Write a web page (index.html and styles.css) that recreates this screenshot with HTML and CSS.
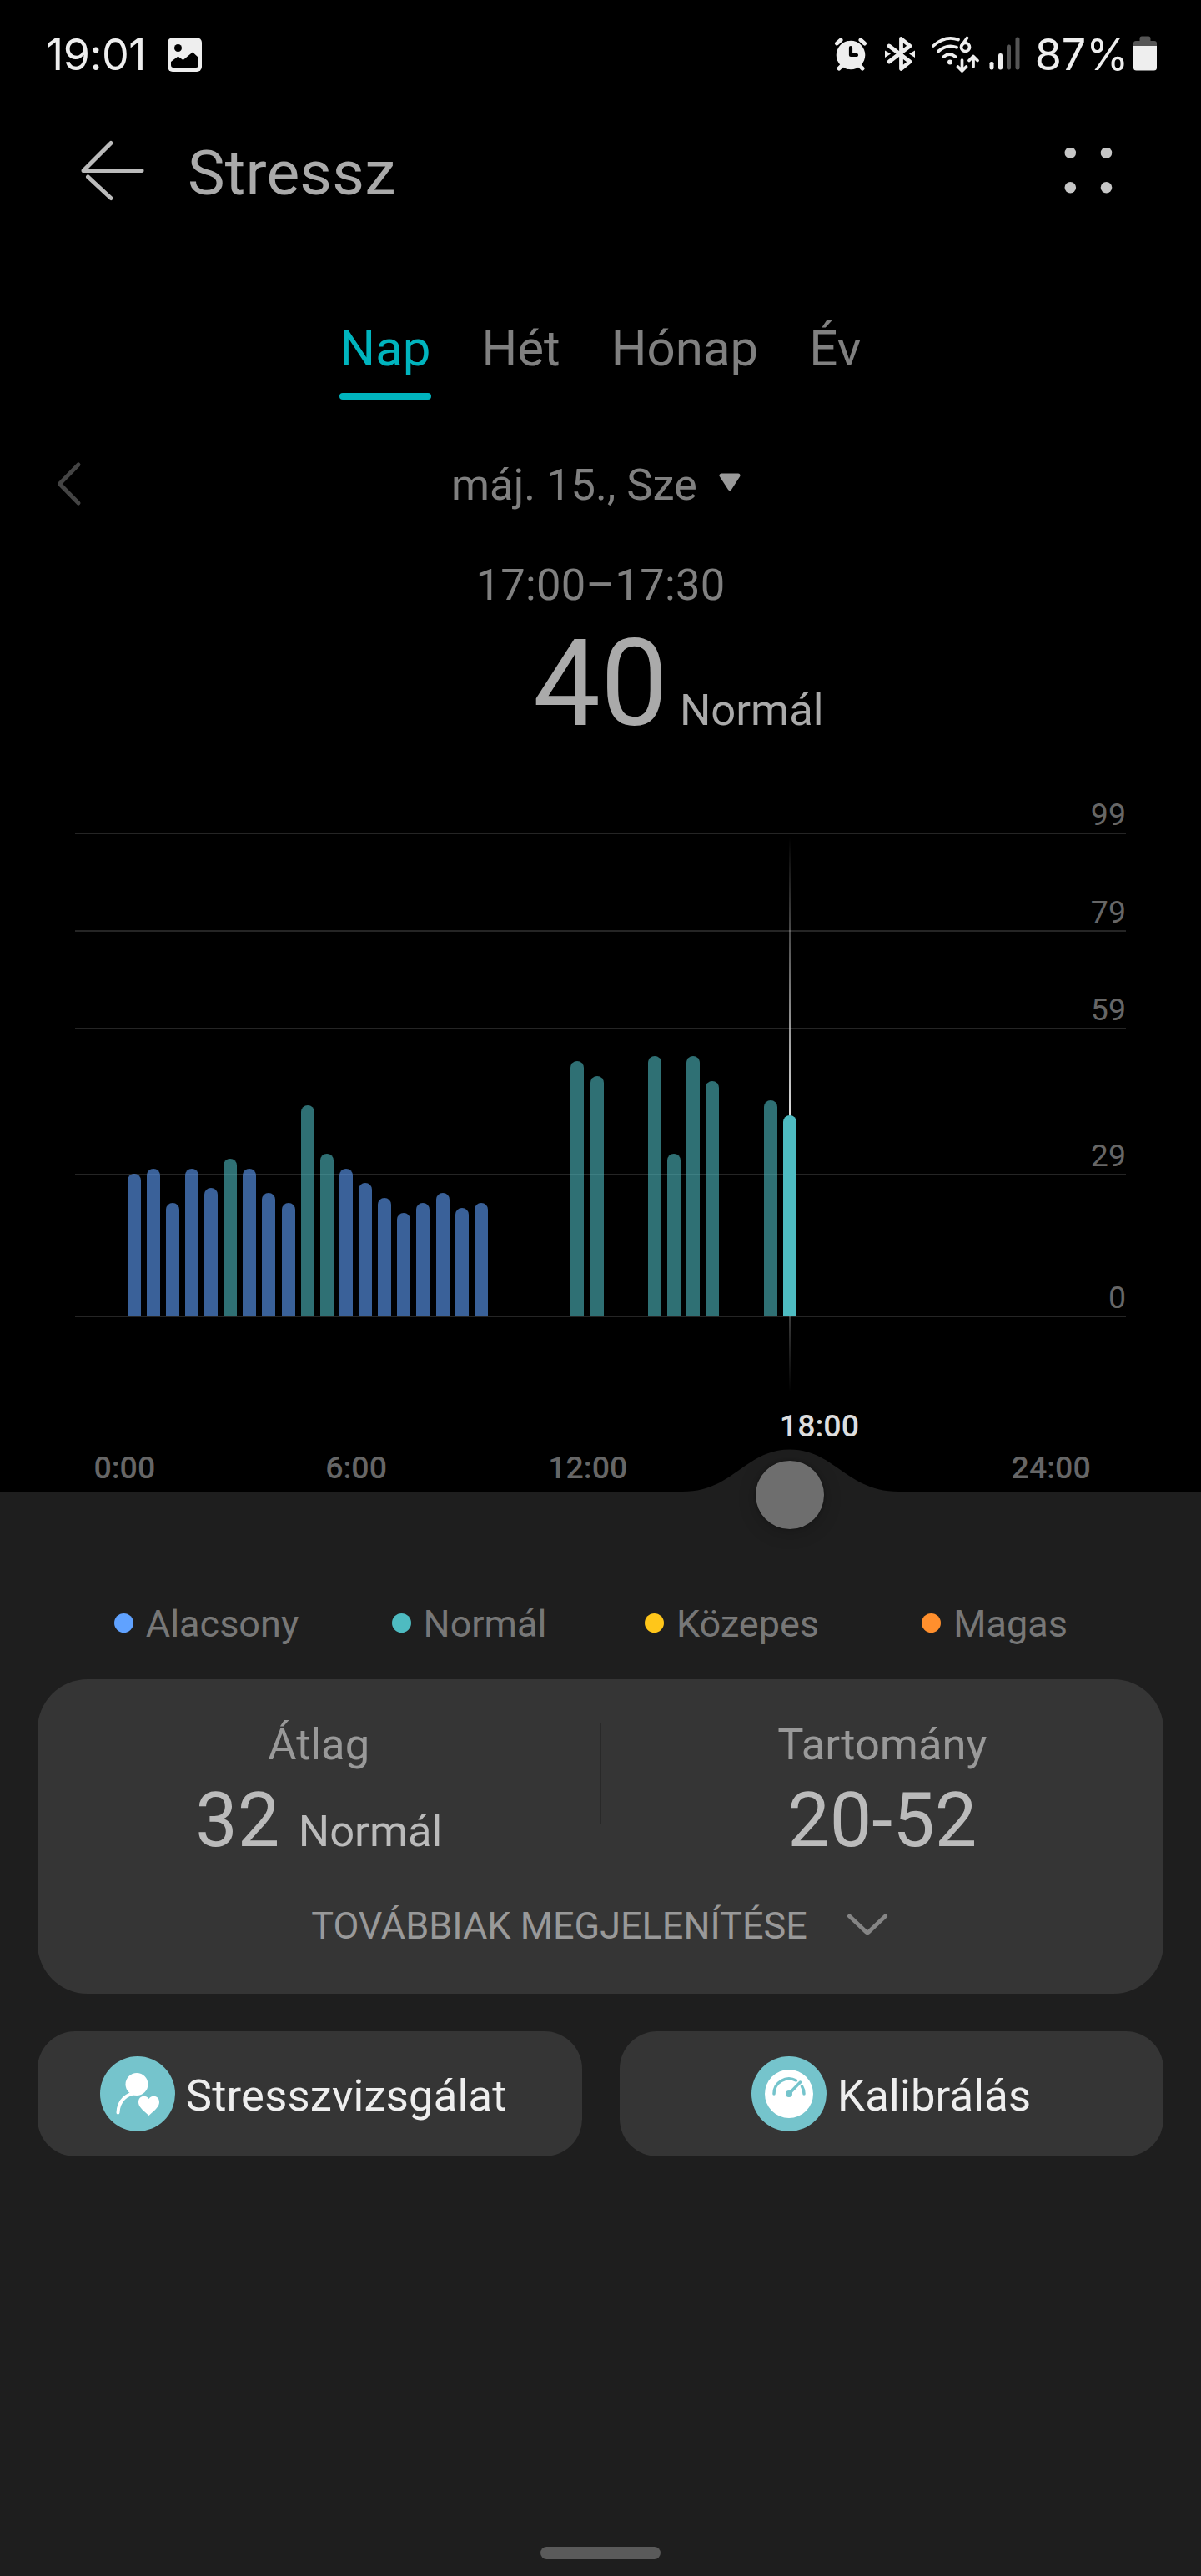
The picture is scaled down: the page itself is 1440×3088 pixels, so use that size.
FILE: index.html
```html
<!DOCTYPE html>
<html lang="hu">
  <head>
    <meta charset="UTF-8" />
    <meta name="viewport" content="width=device-width, initial-scale=1.0" />
    <title>Stressz</title>
    <link rel="stylesheet" href="styles.css">
  </head>
  <body>
    <div class="status">
      <span class="clock">19:01</span>
      <svg class="picture" width="41" height="41" viewBox="0 0 41 41">
        <rect width="41" height="41" rx="6" fill="#eee" />
        <circle cx="12.5" cy="12.5" r="4.5" />
        <path d="M4 29 12.5 22.5 18.500 27 30 17.500 37 24V33q0 3-3 3H7q-3 0-3-3z" />
      </svg>
      <div class="status-right">
        <svg width="40" height="44" viewBox="0 0 40 44">
          <g fill="none" stroke="#eee" stroke-width="5" stroke-linecap="round">
            <path d="M3.500 9 8 5M36.500 9 32 5M10 35l-4 4M30 35l4 4" />
          </g>
          <circle cx="20" cy="23" r="17.300" fill="#eee" />
          <path d="M20 14v9h7" fill="none" stroke="#000" stroke-width="4.200" stroke-linecap="round" stroke-linejoin="round" />
        </svg>
        <svg class="bluetooth" width="38" height="44" viewBox="0 0 38 44">
          <path d="M6 12 31 31 20.500 39.500V3.500L31 12 6 31" fill="none" stroke="#eee" stroke-width="4.800" stroke-linecap="round" stroke-linejoin="round" />
          <path d="M1 17.500 8 21.500 1 26zM37 17.500 30 21.500 37 26z" fill="#eee" />
        </svg>
        <svg class="wifi" width="58" height="44" viewBox="0 0 58 44">
          <g fill="none" stroke="#eee" stroke-width="3.700" stroke-linecap="round" stroke-linejoin="round">
            <path d="M3 12Q17-1 33 4.500M9 18.500Q19 9.500 31 13.800M15.500 25Q22.500 19 29.500 25" />
            <path d="M43.500 2.500 37.500 11" />
            <circle cx="41.500" cy="13.500" r="5" />
            <path d="M37.500 29V41M32.500 37l5 5 5-5M51 37V25.500M46 29.500l5-5 5 5" />
          </g>
          <circle cx="23" cy="31.500" r="3" fill="#eee" />
        </svg>
        <svg class="signal" width="38" height="44" viewBox="0 0 38 44">
          <rect x="1.500" y="31" width="5" height="9.500" rx="2.200" fill="#eee" />
          <rect x="12" y="21" width="5" height="19.500" rx="2.200" fill="#eee" />
          <rect x="22" y="10.500" width="5" height="30" rx="2.200" fill="#555" />
          <rect x="32.500" y="1.500" width="5" height="39" rx="2.200" fill="#555" />
        </svg>
        <span class="percent">87%</span>
        <svg width="28" height="44" viewBox="0 0 28 44">
          <path d="M0 12V9q0-3 3-3h4.500V3q0-2.500 2.500-2.500h8q2.500 0 2.500 2.500v3H25q3 0 3 3v3z" fill="#555" />
          <path d="M0 12h28v26q0 3.500-3.500 3.500h-21Q0 41.500 0 38z" fill="#eee" />
        </svg>
      </div>
    </div>

    <header class="header">
      <svg width="80" height="74" viewBox="0 0 80 74">
        <path d="M75 36.500H5L38 3.500M10.500 44 38 69.500" fill="none" stroke="#bbb" stroke-width="5" stroke-linecap="round" stroke-linejoin="round" />
      </svg>
      <h1>Stressz</h1>
      <svg class="menu" width="58" height="56" viewBox="0 0 58 56" fill="#c6c6c6">
        <circle cx="7.300" cy="6.300" r="6.800" />
        <circle cx="50.500" cy="6.300" r="6.800" />
        <circle cx="7.300" cy="47.700" r="6.800" />
        <circle cx="50.500" cy="47.700" r="6.800" />
      </svg>
    </header>

    <nav class="tabs">
      <span class="tab active">Nap</span>
      <span class="tab">Hét</span>
      <span class="tab">Hónap</span>
      <span class="tab">Év</span>
    </nav>

    <div class="date">
      <svg width="30" height="54" viewBox="0 0 30 54">
        <path d="M26 4 3.500 27 26 50" fill="none" stroke="#444" stroke-width="5" stroke-linecap="round" stroke-linejoin="round" />
      </svg>
      <div class="date-label">
        <span>máj. 15., Sze</span>
        <svg width="28" height="22" viewBox="0 0 28 22">
          <path d="M4 3H24L14 18.500z" fill="#9a9a9a" stroke="#9a9a9a" stroke-width="5" stroke-linejoin="round" />
        </svg>
      </div>
    </div>

    <div class="time">17:00–17:30</div>
    <div class="score">
      <span class="score-num">40</span>
      <span class="score-text">Normál</span>
    </div>

    <div class="chart">
      <div class="lines">
        <div class="line first">99</div>
        <div class="line">79</div>
        <div class="line">59</div>
        <div class="line wide">29</div>
        <div class="line last">0</div>
      </div>
      <div class="cursor"></div>
      <div class="bars"></div>
    </div>
    <div class="axis">
      <span>0:00</span>
      <span>6:00</span>
      <span>12:00</span>
      <span class="current">18:00</span>
      <span>24:00</span>
    </div>

    <main class="panel">
      <svg class="bump" width="260" height="52" viewBox="0 0 260 52">
        <path d="M0 52V51C62 51 75 .5 129 .5S196 51 260 51V52z" fill="#1e1e1e" />
      </svg>
      <div class="knob"></div>

      <ul class="legend">
        <li><i class="dot low"></i>Alacsony</li>
        <li><i class="dot normal"></i>Normál</li>
        <li><i class="dot medium"></i>Közepes</li>
        <li><i class="dot high"></i>Magas</li>
      </ul>

      <section class="card">
        <div class="stats">
          <div class="stat">
            <div class="stat-title">Átlag</div>
            <div class="stat-value">32 <small>Normál</small></div>
          </div>
          <div class="divider"></div>
          <div class="stat">
            <div class="stat-title">Tartomány</div>
            <div class="stat-value">20-52</div>
          </div>
        </div>
        <div class="more">
          <span>TOVÁBBIAK MEGJELENÍTÉSE</span>
          <svg width="54" height="30" viewBox="0 0 54 30">
            <path d="M5.500 5 25 23.500Q27 25.500 29 23.500L48.500 5" fill="none" stroke="#858585" stroke-width="5" stroke-linecap="round" />
          </svg>
        </div>
      </section>

      <div class="actions">
        <div class="action test">
          <svg width="90" height="90" viewBox="0 0 90 90">
            <circle cx="45" cy="45" r="45" fill="#75c4cc" />
            <circle cx="44" cy="33.500" r="13.500" fill="#fff" />
            <path d="M21.500 67.500C22 53 32 44.500 44 44" fill="none" stroke="#fff" stroke-width="4" stroke-linecap="round" />
            <path d="M58.500 71C50 63.500 46 60 46 55 46 47 55 45.500 58.500 51 62 45.500 71 47 71 55 71 60 67 63.500 58.500 71z" fill="#fff" />
          </svg>
          <span>Stresszvizsgálat</span>
        </div>
        <div class="action">
          <svg width="90" height="90" viewBox="0 0 90 90">
            <circle cx="45" cy="45" r="45" fill="#75c4cc" />
            <circle cx="45" cy="45" r="29" fill="#fff" />
            <g fill="none" stroke="#75c4cc" stroke-width="3.500" stroke-linecap="round">
              <path d="M27 45A18 18 0 0 1 53.500 29M60.500 36Q63 40 63 45" />
              <path d="M45 45 58.500 31" />
            </g>
            <circle cx="45" cy="45" r="4" fill="#75c4cc" />
          </svg>
          <span>Kalibrálás</span>
        </div>
      </div>

      <div class="home"></div>
    </main>

    <script>
      // félórás értékek 0:00-tól, null = nincs mérés
      const values = [
        28, 29, 22, 29, 25, 31, 29, 24, 22, 42, 32, 29, 26, 23, 20, 22, 24, 21, 22,
        null, null, null, null, 51, 48, null, null, 52, 32, 52, 47, null, null, 43, 40
      ];
      const selected = 34;
      const bars = document.querySelector(".bars");

      values.forEach((value, index) => {
        const bar = document.createElement("div");
        bar.className = "bar";
        if (value !== null) {
          bar.classList.add(value < 30 ? "low" : "normal");
          bar.style.height = value * 5.85 + 7.5 + "px";
        }
        if (index === selected) bar.classList.add("selected");
        bars.append(bar);
      });
    </script>
  </body>
</html>
```
FILE: styles.css
```css
* {
  box-sizing: border-box;
  margin: 0;
  padding: 0;
}
body {
  width: 1440px;
  min-height: 3088px;
  display: flex;
  flex-direction: column;
  background-color: #000;
  color: #808080;
  font-family: Roboto, sans-serif;
  font-size: 52.5px;
}
svg {
  display: block;
  flex: none;
}

/* status bar */
.status {
  height: 130px;
  padding: 0 53px 0 55px;
  display: flex;
  align-items: center;
  color: #eee;
  font-family: Inter, sans-serif;
  font-size: 52px;
}
.clock {
  width: 146px;
  letter-spacing: -0.5px;
}
.status-right {
  margin-left: auto;
  display: flex;
  align-items: center;
}
.bluetooth {
  margin-left: 20px;
}
.wifi {
  margin-left: 18px;
}
.signal {
  margin-left: 11px;
}
.percent {
  width: 136px;
  padding-left: 12px;
  text-align: center;
}

.header {
  height: 150px;
  padding: 0 106px 0 95px;
  display: flex;
  align-items: center;
}
.header h1 {
  margin: 4px 0 0 50px;
  font-size: 75px;
  font-weight: 400;
  letter-spacing: 0.2px;
  color: #aaa;
}
.menu {
  margin-left: auto;
}

.tabs {
  margin-top: 98px;
  display: flex;
  justify-content: center;
  gap: 61px;
  font-size: 60px;
  line-height: 80px;
}
.tab {
  height: 101px;
}
.tab.active {
  color: #00b4be;
}
.tab.active::after {
  content: "";
  display: block;
  height: 8px;
  margin-top: 13px;
  border-radius: 4px;
  background-color: #00b4be;
}

.date {
  margin-top: 67px;
  padding: 0 68px;
  display: grid;
  grid-template-columns: 1fr auto 1fr;
  align-items: center;
  line-height: 70px;
}
.date > svg {
  margin-top: -3px;
}
.date-label {
  display: flex;
  align-items: center;
  gap: 25px;
  padding-right: 10px;
}
.date-label svg {
  margin-top: -6px;
}
.time {
  margin-top: 50px;
  line-height: 70px;
  letter-spacing: 0.3px;
  text-align: center;
}
.score {
  margin-top: 4px;
  display: grid;
  grid-template-columns: 1fr auto 1fr;
  align-items: baseline;
  column-gap: 14px;
  color: #aaa;
}
.score-num {
  grid-column: 2;
  font-size: 144px;
  line-height: 160px;
}

/* chart */
.chart {
  position: relative;
  margin: 54px 90px 0;
}
.line {
  height: 117px;
  display: flex;
  align-items: flex-end;
  justify-content: flex-end;
  border-bottom: 2px solid #252525;
  color: #666;
  font-size: 37.5px;
  line-height: 44px;
}
.line.first {
  height: 46px;
}
.line.wide {
  height: 175px;
}
.line.last {
  height: 170px;
}
.bars {
  position: absolute;
  left: 62.6px;
  bottom: 1px;
  display: grid;
  grid-template-columns: repeat(48, 23.14px);
  align-items: end;
}
.bar {
  width: 16px;
  border-radius: 8px 8px 0 0;
}
.bar.low {
  background-color: rgba(96, 162, 255, 0.6);
}
.bar.normal {
  background-color: rgba(78, 187, 193, 0.6);
}
.bar.selected {
  background-color: #4ebbc1;
}
.cursor {
  position: absolute;
  left: 856px;
  top: 50px;
  width: 2px;
  height: 665px;
  background: linear-gradient(transparent, #ddd 50%, transparent);
}
.axis {
  width: 1388.5px;
  height: 101px;
  margin: 108px 0 0 10.5px;
  padding-bottom: 7px;
  display: grid;
  grid-template-columns: repeat(5, 1fr);
  align-items: end;
  text-align: center;
  color: #666;
  font-size: 37.5px;
  font-weight: 500;
  line-height: 44px;
}
.current {
  align-self: start;
  color: #ddd;
}

/* bottom panel */
.panel {
  position: relative;
  flex: 1;
  display: flex;
  flex-direction: column;
  padding: 129px 45px 20px;
  background-color: #1e1e1e;
}
.bump {
  position: absolute;
  left: 818px;
  top: -51px;
}
.knob {
  position: absolute;
  left: 905.7px;
  top: -37.5px;
  width: 82.5px;
  height: 82.5px;
  border-radius: 50%;
  background-color: #6e6e6e;
  box-shadow: 0 4px 22px rgba(0, 0, 0, 0.2), 0 0 3px rgba(0, 0, 0, 0.4);
}
.legend {
  padding: 0 45px;
  display: grid;
  grid-template-columns: repeat(4, 1fr);
  list-style: none;
  font-size: 45px;
  line-height: 60px;
  color: #777;
}
.legend li {
  display: flex;
  align-items: center;
  justify-content: center;
}
.dot {
  width: 23px;
  height: 23px;
  margin: -3px 15px 0 0;
  border-radius: 50%;
}
.dot.low {
  background-color: #60a2ff;
}
.dot.normal {
  background-color: #4ebbc1;
}
.dot.medium {
  background-color: #ffc61a;
}
.dot.high {
  background-color: #ff8f2d;
}

.card {
  height: 377px;
  margin-top: 36px;
  padding-top: 48px;
  border-radius: 60px;
  background-color: #353535;
}
.stats {
  height: 185px;
  display: grid;
  grid-template-columns: 1fr 1px 1fr;
  text-align: center;
}
.divider {
  height: 120px;
  margin-top: 5px;
  background-color: #292929;
}
.stat-title {
  line-height: 60px;
  color: #999;
}
.stat-value {
  margin-top: 12px;
  font-size: 90px;
  line-height: 100px;
  color: #bbb;
}
.stat-value small {
  font-size: 52.5px;
}
.more {
  margin-top: 33px;
  display: flex;
  align-items: center;
  justify-content: center;
  gap: 45px;
  font-size: 45px;
  line-height: 60px;
  color: #999;
}
.more svg {
  margin-top: -5px;
}

.actions {
  margin-top: 45px;
  display: grid;
  grid-template-columns: 1fr 1fr;
  gap: 45px;
}
.action {
  height: 150px;
  display: flex;
  align-items: center;
  justify-content: center;
  gap: 13px;
  border-radius: 45px;
  background-color: #353535;
  color: #eee;
  letter-spacing: 0.2px;
}
.action.test {
  padding-right: 15px;
}
.action span {
  padding-top: 3px;
}
.home {
  width: 144px;
  height: 15px;
  margin: auto auto 0;
  border-radius: 8px;
  background-color: #5a5a5a;
}
```
